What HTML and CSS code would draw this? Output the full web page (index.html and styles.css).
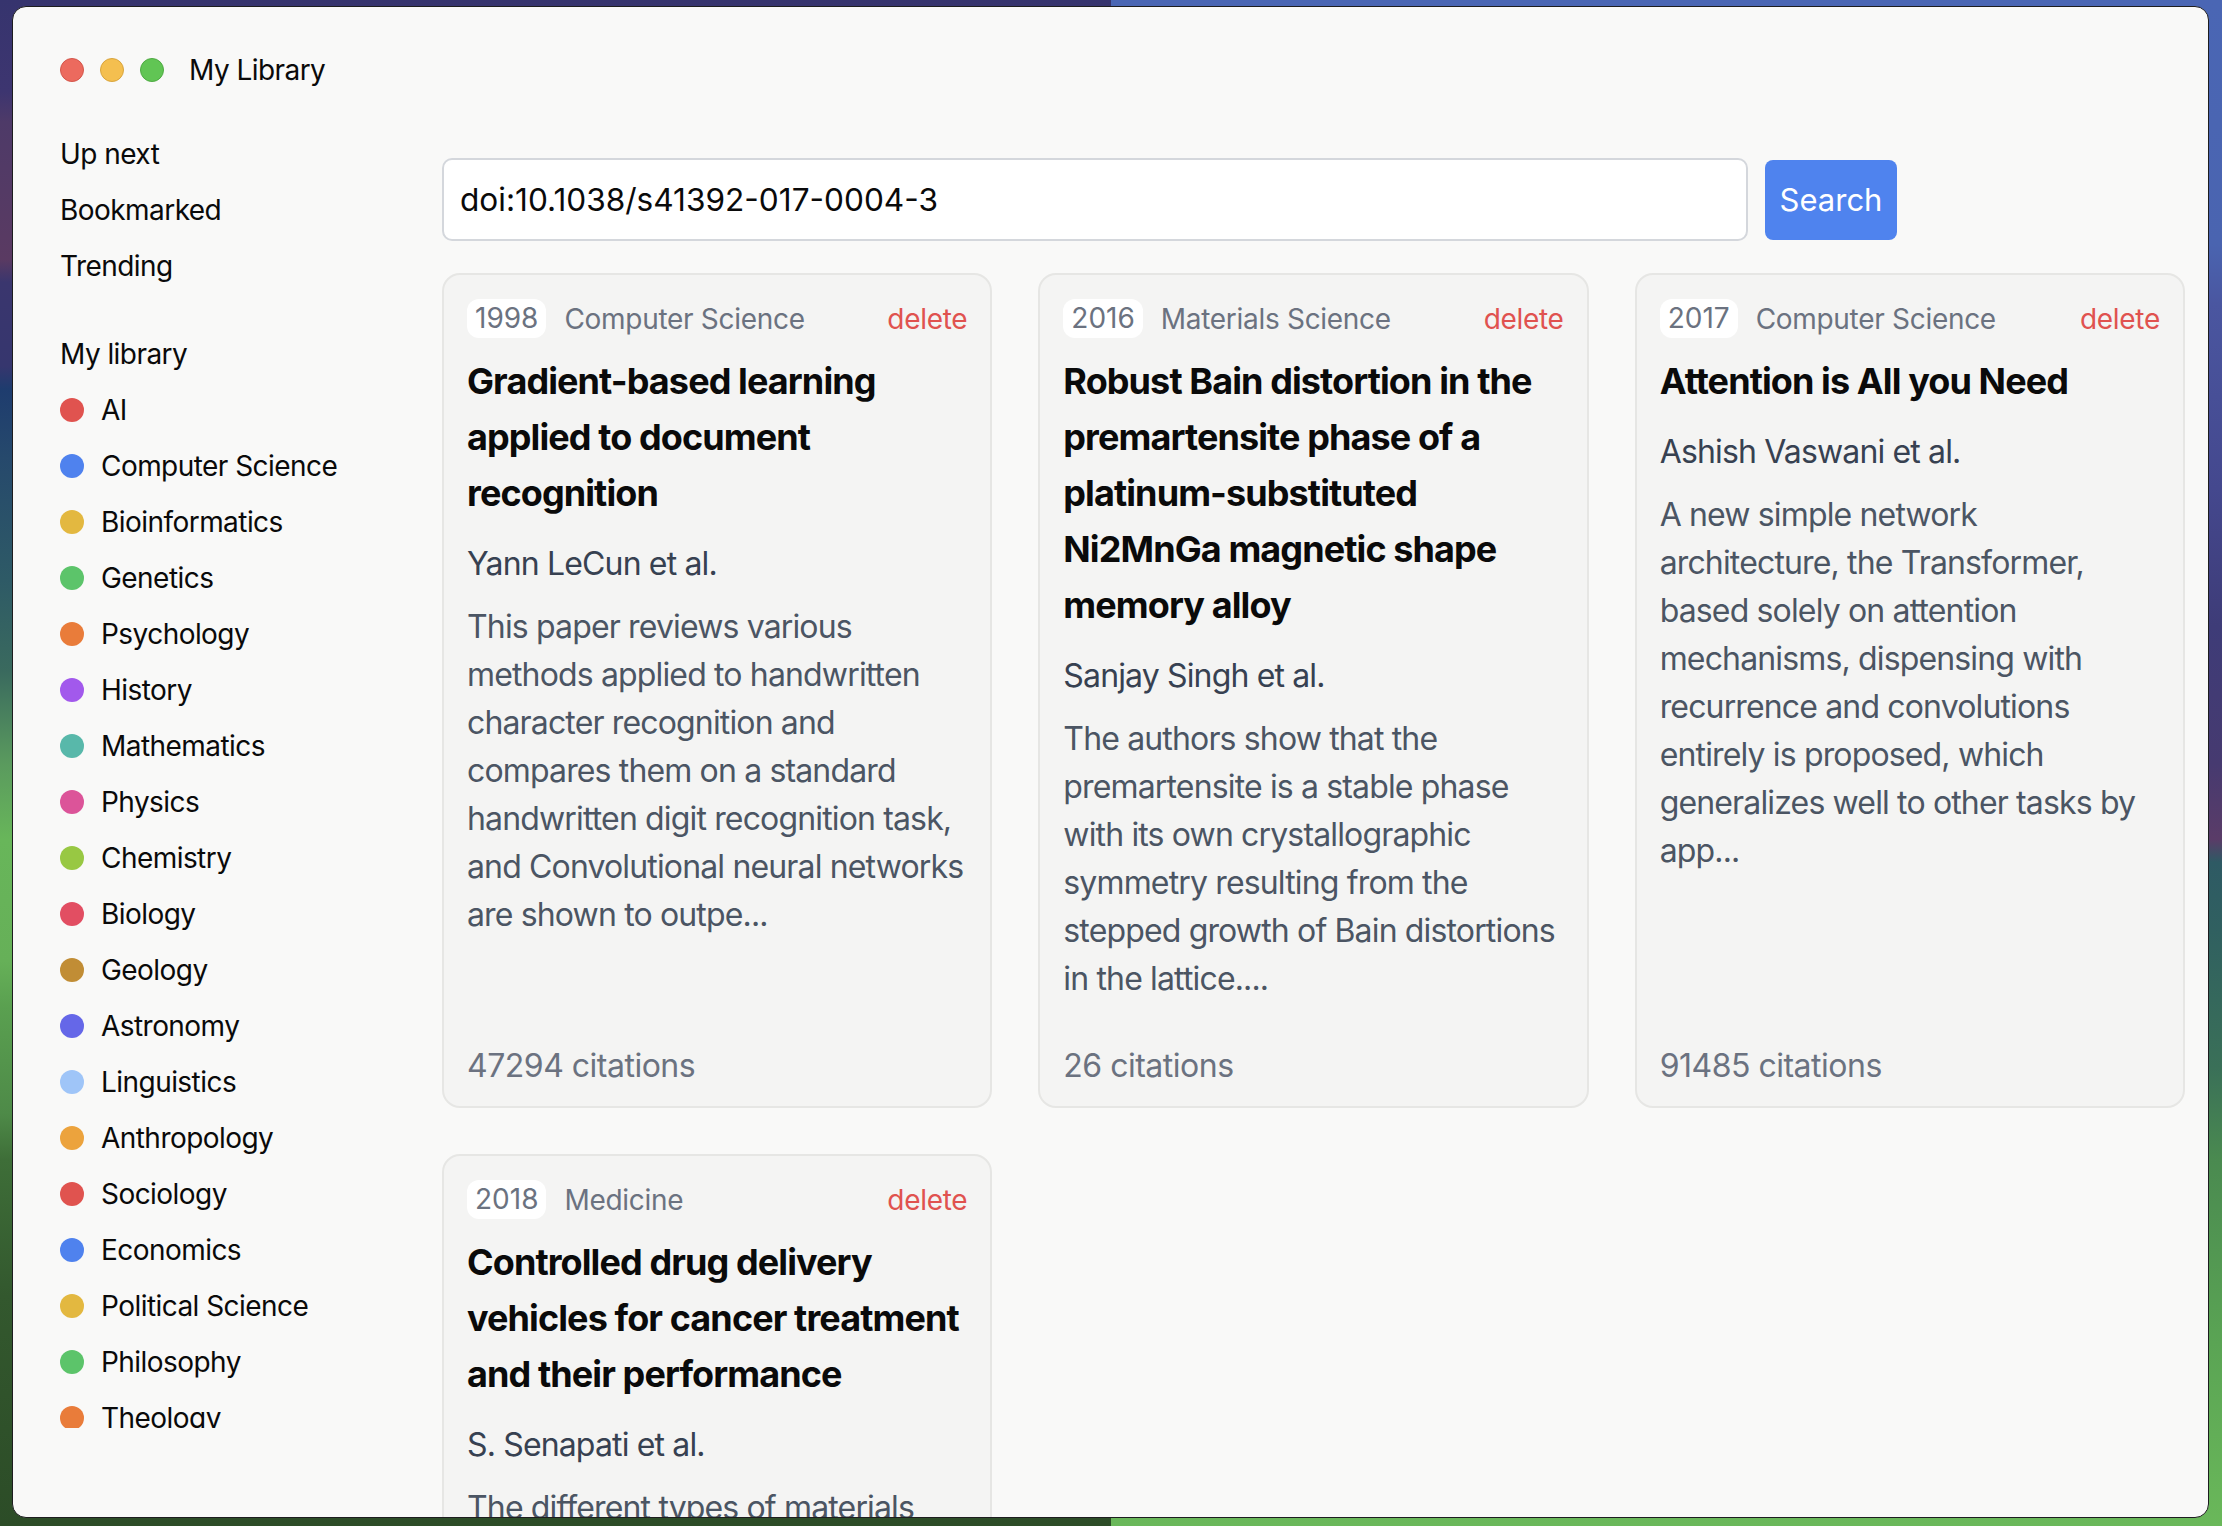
FILE: index.html
```html
<!DOCTYPE html>
<html lang="en">
<head>
<meta charset="utf-8">
<title>My Library</title>
<link rel="stylesheet" href="styles.css">
</head>
<body>
<div class="window">
  <aside class="sidebar">
    <div class="titlebar">
      <span class="light light-red"></span>
      <span class="light light-yellow"></span>
      <span class="light light-green"></span>
      <span class="app-title">My Library</span>
    </div>
    <div class="side-scroll">
      <nav class="nav">
        <a class="nav-item">Up next</a>
        <a class="nav-item">Bookmarked</a>
        <a class="nav-item">Trending</a>
      </nav>
      <div class="section-title">My library</div>
      <ul class="cats">
        <li class="cat"><span class="dot c-red"></span>AI</li>
        <li class="cat"><span class="dot c-blue"></span>Computer Science</li>
        <li class="cat"><span class="dot c-yellow"></span>Bioinformatics</li>
        <li class="cat"><span class="dot c-green"></span>Genetics</li>
        <li class="cat"><span class="dot c-orange"></span>Psychology</li>
        <li class="cat"><span class="dot c-purple"></span>History</li>
        <li class="cat"><span class="dot c-teal"></span>Mathematics</li>
        <li class="cat"><span class="dot c-pink"></span>Physics</li>
        <li class="cat"><span class="dot c-lime"></span>Chemistry</li>
        <li class="cat"><span class="dot c-rose"></span>Biology</li>
        <li class="cat"><span class="dot c-amber"></span>Geology</li>
        <li class="cat"><span class="dot c-indigo"></span>Astronomy</li>
        <li class="cat"><span class="dot c-sky"></span>Linguistics</li>
        <li class="cat"><span class="dot c-gold"></span>Anthropology</li>
        <li class="cat"><span class="dot c-red"></span>Sociology</li>
        <li class="cat"><span class="dot c-blue"></span>Economics</li>
        <li class="cat"><span class="dot c-yellow"></span>Political Science</li>
        <li class="cat"><span class="dot c-green"></span>Philosophy</li>
        <li class="cat"><span class="dot c-orange"></span>Theology</li>
      </ul>
    </div>
  </aside>

  <main class="main">
    <form class="search-row">
      <input class="search-input" type="text" value="doi:10.1038/s41392-017-0004-3">
      <button class="search-btn" type="button">Search</button>
    </form>

    <section class="cards">
      <article class="card">
        <div class="meta"><span class="year">1998</span><span class="field">Computer Science</span><span class="delete">delete</span></div>
        <h2 class="title">Gradient-based learning applied to document recognition</h2>
        <p class="authors">Yann LeCun et al.</p>
        <p class="abstract">This paper reviews various methods applied to handwritten character recognition and compares them on a standard handwritten digit recognition task, and Convolutional neural networks are shown to outpe...</p>
        <p class="citations">47294 citations</p>
      </article>

      <article class="card">
        <div class="meta"><span class="year">2016</span><span class="field">Materials Science</span><span class="delete">delete</span></div>
        <h2 class="title">Robust Bain distortion in the premartensite phase of a platinum-substituted Ni2MnGa magnetic shape memory alloy</h2>
        <p class="authors">Sanjay Singh et al.</p>
        <p class="abstract">The authors show that the premartensite is a stable phase with its own crystallographic symmetry resulting from the stepped growth of Bain distortions in the lattice....</p>
        <p class="citations">26 citations</p>
      </article>

      <article class="card">
        <div class="meta"><span class="year">2017</span><span class="field">Computer Science</span><span class="delete">delete</span></div>
        <h2 class="title">Attention is All you Need</h2>
        <p class="authors">Ashish Vaswani et al.</p>
        <p class="abstract">A new simple network architecture, the Transformer, based solely on attention mechanisms, dispensing with recurrence and convolutions entirely is proposed, which generalizes well to other tasks by app...</p>
        <p class="citations">91485 citations</p>
      </article>

      <article class="card">
        <div class="meta"><span class="year">2018</span><span class="field">Medicine</span><span class="delete">delete</span></div>
        <h2 class="title">Controlled drug delivery vehicles for cancer treatment and their performance</h2>
        <p class="authors">S. Senapati et al.</p>
        <p class="abstract">The different types of materials used as drug delivery vehicles for cancer treatment are reviewed, together with their performance...</p>
        <p class="citations">2840 citations</p>
      </article>
    </section>
  </main>
</div>
</body>
</html>
```

FILE: styles.css
```css
html, body {
  margin: 0;
  padding: 0;
}

body {
  width: 2222px;
  height: 1526px;
  overflow: hidden;
  font-family: Inter, "Noto Sans", sans-serif;
  color: #0a0a0a;
  background:
    linear-gradient(to bottom,
      #36346e 0%, #3d3570 6%, #4e3a68 8%, #5a3a62 17%, #3a366e 18.5%,
      #36366e 24%, #1e3c6e 25.5%, #26496c 30%, #2e5a66 38%, #3a6a5e 44%,
      #5a9a5e 50%, #68b65a 55%, #66b058 63%, #5aa050 66%, #4e8a48 73%,
      #3e6e38 76%, #33582e 85%, #2c4c27 100%) left top / 50% 100% no-repeat,
    linear-gradient(to bottom,
      #4a66b4 0%, #4a64b0 16%, #4a56a0 20%, #44488e 32%, #3e3c78 41%,
      #463a70 50%, #5a3c68 55%, #2e5a64 56.5%, #306060 61%, #3a7058 70%,
      #4a8a50 76%, #5aa454 88%, #6ab85a 100%) right top / 50% 100% no-repeat;
}

.window {
  margin: 6px 0 0 12px;
  width: 2197px;
  height: 1512px;
  box-sizing: border-box;
  border: 1px solid #1d1d1f;
  border-radius: 14px;
  background: #f9f9f8;
  display: flex;
  overflow: hidden;
}

/* ---------- sidebar ---------- */
.sidebar {
  width: 429px;
  flex: none;
  box-sizing: border-box;
  padding: 0 0 89px 47px;
  display: flex;
  flex-direction: column;
}

.titlebar {
  height: 24px;
  margin: 51px 0 44px;
  display: flex;
  align-items: center;
  gap: 16px;
}

.light {
  width: 24px;
  height: 24px;
  border-radius: 50%;
  box-sizing: border-box;
  flex: none;
}
.light-red { background: #ec6a5e; border: 1px solid #d4564b; }
.light-yellow { background: #f4bf4f; border: 1px solid #d9a53d; }
.light-green { background: #61c554; border: 1px solid #4fab43; }

.app-title {
  margin-left: 9px;
  font-size: 28px;
  line-height: 24px;
  letter-spacing: -0.55px;
  color: #0a0a0a;
}

.side-scroll {
  flex: 1;
  overflow: hidden;
}

.nav {
  display: flex;
  flex-direction: column;
}

.nav-item,
.section-title,
.cat {
  font-size: 28px;
  line-height: 56px;
  letter-spacing: -0.55px;
  color: #0a0a0a;
}

.section-title {
  margin-top: 32px;
}

.cats {
  list-style: none;
  margin: 0;
  padding: 0;
}

.cat {
  display: flex;
  align-items: center;
  gap: 17px;
}

.dot {
  width: 24px;
  height: 24px;
  border-radius: 50%;
  flex: none;
}
.c-red { background: #e0534f; }
.c-blue { background: #4f82ee; }
.c-yellow { background: #e3b840; }
.c-green { background: #5cc46a; }
.c-orange { background: #e97c3a; }
.c-purple { background: #a259ec; }
.c-teal { background: #58b8aa; }
.c-pink { background: #dc5499; }
.c-lime { background: #98c843; }
.c-rose { background: #e24e62; }
.c-amber { background: #c18d35; }
.c-indigo { background: #6567e8; }
.c-sky { background: #9fc5f8; }
.c-gold { background: #eca33d; }

/* ---------- main ---------- */
.main {
  flex: 1;
  min-width: 0;
  box-sizing: border-box;
  padding: 151px 23px 0 0;
  overflow: hidden;
}

.search-row {
  width: 1455px;
  height: 83px;
  margin: 0;
  display: flex;
  align-items: center;
  gap: 17px;
}

.search-input {
  flex: 1;
  min-width: 0;
  height: 83px;
  box-sizing: border-box;
  border: 2px solid #d4d7dc;
  border-radius: 10px;
  background: #ffffff;
  padding: 0 16px;
  font-family: Inter, "Noto Sans", sans-serif;
  font-size: 31.6px;
  color: #0a0a0a;
  outline: none;
}

.search-btn {
  width: 132px;
  height: 80px;
  flex: none;
  border: none;
  border-radius: 8px;
  background: #4f83ee;
  color: #ffffff;
  font-family: Inter, "Noto Sans", sans-serif;
  font-size: 31px;
  padding: 0;
}

.cards {
  margin-top: 32px;
  display: grid;
  grid-template-columns: repeat(3, 1fr);
  gap: 46px;
}

.card {
  background: #f4f4f3;
  border: 2px solid #e6e6e4;
  border-radius: 18px;
  padding: 24px 23px;
  display: flex;
  flex-direction: column;
  min-width: 0;
}

.meta {
  height: 39px;
  display: flex;
  align-items: center;
  font-size: 28px;
  letter-spacing: -0.3px;
  color: #6b7280;
}

.year {
  background: #ffffff;
  border-radius: 12px;
  padding: 0 8px;
  line-height: 39px;
  letter-spacing: 0;
}

.field {
  margin-left: 18px;
}

.delete {
  margin-left: auto;
  color: #e0524f;
}

.title {
  margin: 15px 0 0;
  font-size: 36px;
  line-height: 56px;
  font-weight: 700;
  letter-spacing: -0.9px;
  color: #0a0a0a;
}

.authors,
.abstract,
.citations {
  margin: 0;
  font-size: 32px;
  line-height: 48px;
  letter-spacing: -0.85px;
}

.authors {
  margin-top: 19px;
  color: #374151;
}

.abstract {
  margin-top: 15px;
  color: #4b5563;
}

.citations {
  margin-top: auto;
  padding-top: 47px;
  line-height: 32px;
  letter-spacing: -0.5px;
  color: #6b7280;
}
```
